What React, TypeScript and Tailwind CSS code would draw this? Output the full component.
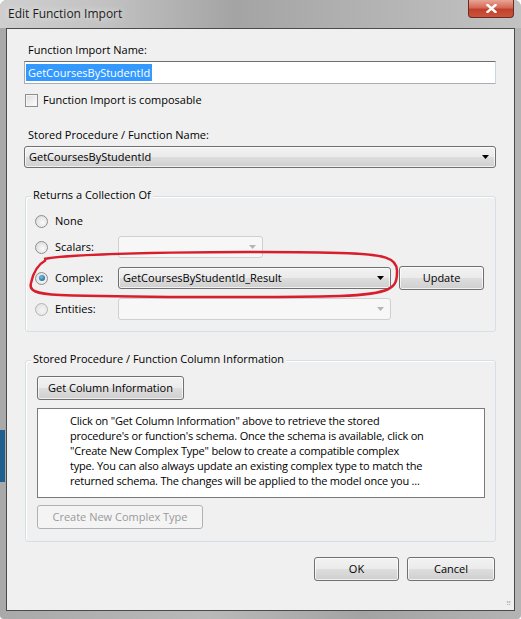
import React from "react";

const face =
  "bg-[linear-gradient(to_bottom,#f2f2f2_0%,#ebebeb_48%,#dddddd_52%,#cfcfcf_100%)] shadow-[inset_0_0_0_1px_rgba(255,255,255,0.7)]";
const btn = `flex items-center justify-center rounded-[3px] border border-[#707070] ${face}`;

function Arrow({ disabled }: { disabled?: boolean }) {
  return (
    <svg width="7" height="4" viewBox="0 0 7 4" aria-hidden="true">
      <path d="M0 0h7L3.5 4z" fill={disabled ? "#b5b5b5" : "#000"} />
    </svg>
  );
}

function Combo({ value, className }: { value: string; className: string }) {
  return (
    <div
      className={`flex h-[22px] items-center justify-between rounded-[3px] border border-[#707070] pl-[4px] pr-[6px] ${face} ${className}`}
    >
      <span>{value}</span>
      <Arrow />
    </div>
  );
}

function DisabledCombo({ className }: { className: string }) {
  return (
    <div
      className={`flex h-[22px] items-center justify-end rounded-[3px] border border-[#d0d0d0] bg-[#f7f7f7] pr-[6px] ${className}`}
    >
      <Arrow disabled />
    </div>
  );
}

function Radio({ checked, disabled }: { checked?: boolean; disabled?: boolean }) {
  return (
    <span
      className={`flex h-[13px] w-[13px] shrink-0 items-center justify-center rounded-full border ${
        disabled
          ? "border-[#b4b4b4] bg-[radial-gradient(circle_at_60%_60%,#f4f4f4,#dedede)]"
          : "border-[#8e8f8f] bg-[radial-gradient(circle_at_60%_60%,#fafafa,#d6d6d6)]"
      }`}
    >
      {checked && (
        <span className="h-[6px] w-[6px] rounded-full bg-[radial-gradient(circle_at_40%_35%,#6fc3ec,#0f4f7c)]" />
      )}
    </span>
  );
}

export default function App() {
  return (
    <div className="min-h-screen bg-white">
      <div className="relative flex h-[619px] w-[521px] flex-col overflow-hidden rounded-t-[7px] rounded-b-[4px] bg-[linear-gradient(#1d5f8e,#1d5f8e),linear-gradient(to_right,#a9a9a9,#b9b9b9_40%,#a3a3a3_70%,#b4b4b4)] bg-[length:5px_52px,100%_100%] bg-[position:0_430px,0_0] bg-no-repeat font-['Open_Sans','Noto_Sans',sans-serif] text-[11px] text-black">
        {/* Title bar */}
        <div className="flex h-[28px] shrink-0 items-start justify-between bg-[linear-gradient(to_right,#cfcfcf_0%,#c2c2c2_20%,#a4a4a4_45%,#b2b2b2_70%,#c2c2c2_100%)]">
          <span className="pl-[8px] pt-[6px] text-[12px] leading-[16px] text-[#1c1c1c] [text-shadow:0_0_6px_rgba(255,255,255,0.9)]">
            Edit Function Import
          </span>
          <div className="mr-[7px] flex h-[18px] w-[46px] items-center justify-center rounded-b-[4px] border border-t-0 border-[#6b2a22] bg-[linear-gradient(to_bottom,#e9a596_0%,#d46a55_45%,#c2412b_55%,#c9553e_100%)]">
            <svg width="11" height="9" viewBox="0 0 11 9" aria-hidden="true">
              <path d="M1.5 1l8 7M9.5 1l-8 7" stroke="#fff" strokeWidth="2.4" strokeLinecap="square" />
            </svg>
          </div>
        </div>

        {/* Client area */}
        <div className="ml-[6px] flex w-[509px] flex-1 flex-col border border-[#4a4a4a] bg-[#f0f0f0] pl-[17px]">
          <div className="ml-[4px] mt-[13px] leading-[16px]">Function Import Name:</div>
          <div className="mt-[3px] flex h-[23px] w-[472px] items-center border border-[#abadb3] border-t-[#6e6e6e] border-r-[#c6d8e6] bg-white pl-[1px]">
            <span className="bg-[#3399ff] px-[2px] leading-[17px] text-white">GetCoursesByStudentId</span>
          </div>

          <div className="ml-[1px] mt-[8px] flex h-[16px] items-center">
            <span className="h-[13px] w-[13px] border border-[#8e8f8f] bg-[linear-gradient(135deg,#dcdcdc,#ffffff)] shadow-[inset_0_0_0_1px_#f4f4f4]" />
            <span className="ml-[5px] leading-[16px]">Function Import is composable</span>
          </div>

          <div className="ml-[4px] mt-[19px] leading-[16px]">Stored Procedure / Function Name:</div>
          <Combo value="GetCoursesByStudentId" className="mt-[3px] w-[472px]" />

          {/* Returns a Collection Of */}
          <div className="relative ml-[1px] mt-[28px] w-[471px]">
            <div className="flex flex-col rounded-[3px] border border-[#d5dfe5] pb-[11px] pl-[9px] pt-[16px] shadow-[inset_1px_1px_0_#ffffff]">
              <div className="flex h-[16px] items-center">
                <Radio />
                <span className="ml-[7px]">None</span>
              </div>
              <div className="mt-[7px] flex h-[22px] items-center">
                <Radio />
                <span className="ml-[7px] w-[63px]">Scalars:</span>
                <DisabledCombo className="w-[145px]" />
              </div>
              <div className="mt-[8px] flex h-[24px] items-center">
                <Radio checked />
                <span className="ml-[7px] w-[63px]">Complex:</span>
                <Combo value="GetCoursesByStudentId_Result" className="w-[273px]" />
                <div className={`${btn} ml-[8px] h-[24px] w-[85px]`}>Update</div>
              </div>
              <div className="mt-[8px] flex h-[22px] items-center">
                <Radio disabled />
                <span className="ml-[7px] w-[63px]">Entities:</span>
                <DisabledCombo className="w-[273px]" />
              </div>
            </div>
            <span className="absolute left-[6px] top-[-9px] bg-[#f0f0f0] px-[2px] leading-[16px]">
              Returns a Collection Of
            </span>
          </div>

          {/* Column information */}
          <div className="relative ml-[1px] mt-[28px] w-[471px]">
            <div className="flex flex-col items-start rounded-[3px] border border-[#d5dfe5] pb-[12px] pl-[11px] pt-[15px] shadow-[inset_1px_1px_0_#ffffff]">
              <div className={`${btn} h-[24px] w-[147px]`}>Get Column Information</div>
              <div className="mt-[8px] h-[90px] w-[448px] whitespace-nowrap border border-[#7a7a7a] bg-white pl-[32px] pt-[4px] leading-[15px] tracking-[-0.2px]">
                Click on "Get Column Information" above to retrieve the stored
                <br />
                procedure's or function's schema. Once the schema is available, click on
                <br />
                "Create New Complex Type" below to create a compatible complex
                <br />
                type. You can also always update an existing complex type to match the
                <br />
                returned schema. The changes will be applied to the model once you ...
              </div>
              <div className="mt-[7px] flex h-[24px] w-[166px] items-center justify-center rounded-[3px] border border-[#adb2b5] bg-[#f4f4f4] text-[#9a9a9a]">
                Create New Complex Type
              </div>
            </div>
            <span className="absolute left-[6px] top-[-9px] bg-[#f0f0f0] px-[2px] leading-[16px]">
              Stored Procedure / Function Column Information
            </span>
          </div>

          <div className="mt-[15px] flex w-[471px] justify-end gap-[8px]">
            <div className={`${btn} h-[24px] w-[85px] border-[#3c7fb1] shadow-[inset_0_0_0_1px_#7fd6f7]`}>OK</div>
            <div className={`${btn} h-[24px] w-[88px]`}>Cancel</div>
          </div>
          <div className="mb-[3px] mr-[3px] mt-auto self-end text-[7px] leading-[7px] text-[#b0b0b0]">⠿</div>
        </div>
        <div className="h-[8px] shrink-0" />

        {/* Red annotation drawn over the dialog */}
        <svg className="pointer-events-none absolute left-0 top-0" width="521" height="619" aria-hidden="true">
          <path
            d="M44 259 C80 252 250 251 340 253 C385 254 398 258 397 272 C397 288 392 294 340 296 C250 298 120 297 60 295 C34 294 29 290 31 283 C33 273 37 265 46 260"
            fill="none"
            stroke="#d81e2c"
            strokeWidth="2.5"
          />
        </svg>
      </div>
    </div>
  );
}
